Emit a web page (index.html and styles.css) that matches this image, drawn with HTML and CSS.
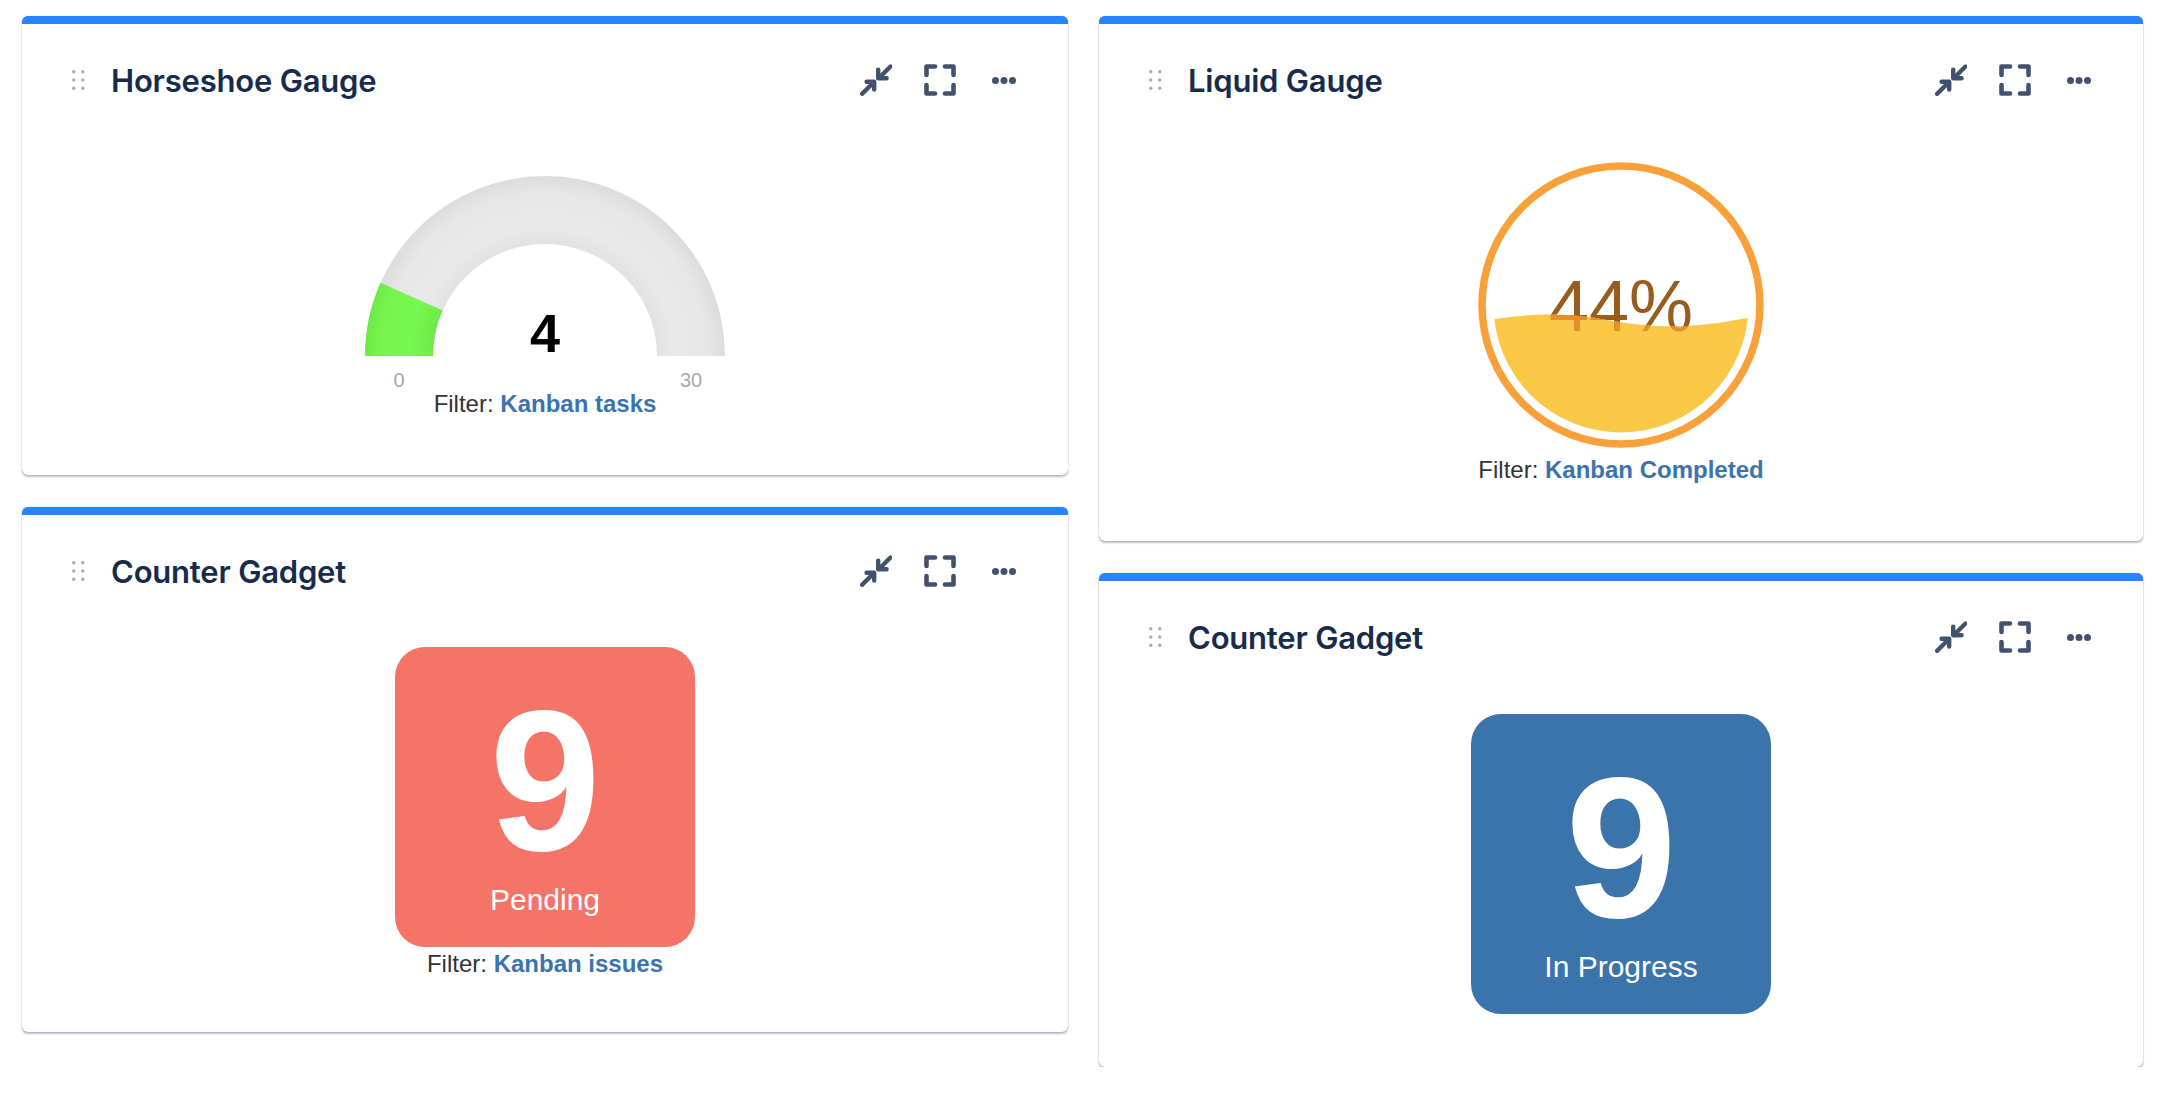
FILE: index.html
```html
<!DOCTYPE html>
<html lang="en">
<head>
<meta charset="utf-8">
<title>Dashboard gadgets</title>
<link rel="stylesheet" href="styles.css">
</head>
<body>
<svg class="defs" width="0" height="0" aria-hidden="true">
  <defs>
    <symbol id="i-drag" viewBox="0 0 13 20">
      <circle cx="1.75" cy="1.75" r="1.75"/><circle cx="10.75" cy="1.75" r="1.75"/>
      <circle cx="1.75" cy="10" r="1.75"/><circle cx="10.75" cy="10" r="1.75"/>
      <circle cx="1.75" cy="18.25" r="1.75"/><circle cx="10.75" cy="18.25" r="1.75"/>
    </symbol>
    <symbol id="i-collapse" viewBox="0 0 32 32">
      <g fill="none" stroke="currentColor" stroke-width="4.4" stroke-linecap="round" stroke-linejoin="round">
        <path d="M30.5 2.5 L19.5 13.5"/>
        <path d="M18.2 5.6 V14.2 H26.6"/>
        <path d="M2.2 29.8 L13 19"/>
        <path d="M6.6 17.8 H14.2 V25.6"/>
      </g>
    </symbol>
    <symbol id="i-full" viewBox="0 0 32 32">
      <g fill="none" stroke="currentColor" stroke-width="4.6" stroke-linecap="round" stroke-linejoin="round">
        <path d="M2.5 11 V2.5 H11"/>
        <path d="M21 2.5 H29.5 V11"/>
        <path d="M29.5 21 V29.5 H21"/>
        <path d="M11 29.5 H2.5 V21"/>
      </g>
    </symbol>
    <symbol id="i-more" viewBox="0 0 32 32">
      <circle cx="7.5" cy="16.5" r="3.5"/><circle cx="16" cy="16.5" r="3.5"/><circle cx="24.5" cy="16.5" r="3.5"/>
    </symbol>
  </defs>
</svg>

<main class="dashboard">
  <section class="column">
    <article class="card">
      <header class="card-head">
        <svg class="drag" width="13" height="20"><use href="#i-drag"/></svg>
        <h2 class="card-title">Horseshoe Gauge</h2>
        <div class="actions">
          <svg class="icon" width="32" height="32"><use href="#i-collapse"/></svg>
          <svg class="icon" width="32" height="32"><use href="#i-full"/></svg>
          <svg class="icon" width="32" height="32"><use href="#i-more"/></svg>
        </div>
      </header>
      <div class="card-body body-gauge">
        <svg class="horseshoe" width="400" height="214" viewBox="0 0 400 214">
          <defs>
            <radialGradient id="band" gradientUnits="userSpaceOnUse" cx="200" cy="180" r="180">
              <stop offset="0.62" stop-color="#e3e2e3"/>
              <stop offset="0.72" stop-color="#eae9ea"/>
              <stop offset="0.9" stop-color="#e8e7e8"/>
              <stop offset="1" stop-color="#dddcdd"/>
            </radialGradient>
            <radialGradient id="greenband" gradientUnits="userSpaceOnUse" cx="200" cy="180" r="180">
              <stop offset="0.62" stop-color="#6fe94a"/>
              <stop offset="0.75" stop-color="#78f74f"/>
              <stop offset="0.92" stop-color="#77f54e"/>
              <stop offset="1" stop-color="#6ee847"/>
            </radialGradient>
          </defs>
          <path d="M20 180 A180 180 0 0 1 380 180 L312 180 A112 112 0 0 0 88 180 Z" fill="url(#band)"/>
          <path d="M20 180 A180 180 0 0 1 35.56 106.79 L97.68 134.45 A112 112 0 0 0 88 180 Z" fill="url(#greenband)"/>
          <text class="hs-value" x="200" y="176">4</text>
          <text class="hs-label" x="54" y="211">0</text>
          <text class="hs-label" x="346" y="211">30</text>
        </svg>
        <p class="filter">Filter: <a href="#">Kanban tasks</a></p>
      </div>
    </article>

    <article class="card">
      <header class="card-head">
        <svg class="drag" width="13" height="20"><use href="#i-drag"/></svg>
        <h2 class="card-title">Counter Gadget</h2>
        <div class="actions">
          <svg class="icon" width="32" height="32"><use href="#i-collapse"/></svg>
          <svg class="icon" width="32" height="32"><use href="#i-full"/></svg>
          <svg class="icon" width="32" height="32"><use href="#i-more"/></svg>
        </div>
      </header>
      <div class="card-body body-counter">
        <div class="counter counter-red">
          <span class="counter-num">9</span>
          <span class="counter-label">Pending</span>
        </div>
        <p class="filter filter-tight">Filter: <a href="#">Kanban issues</a></p>
      </div>
    </article>
  </section>

  <section class="column">
    <article class="card">
      <header class="card-head">
        <svg class="drag" width="13" height="20"><use href="#i-drag"/></svg>
        <h2 class="card-title">Liquid Gauge</h2>
        <div class="actions">
          <svg class="icon" width="32" height="32"><use href="#i-collapse"/></svg>
          <svg class="icon" width="32" height="32"><use href="#i-full"/></svg>
          <svg class="icon" width="32" height="32"><use href="#i-more"/></svg>
        </div>
      </header>
      <div class="card-body body-liquid">
        <svg class="liquid" width="290" height="290" viewBox="0 0 290 290">
          <defs>
            <clipPath id="inner"><circle cx="145" cy="145" r="127.5"/></clipPath>
            <clipPath id="wave">
              <path d="M-112 160.4 Q-50.5 172 11 160.4 Q72.5 148.8 134 160.4 Q195.5 172 257 160.4 Q318.5 148.8 380 160.4 V300 H-112 Z"/>
            </clipPath>
          </defs>
          <circle cx="145" cy="145" r="139" fill="none" stroke="#f8a13b" stroke-width="7.5"/>
          <text class="lq-text lq-top" x="145" y="170.5">44%</text>
          <g clip-path="url(#inner)">
            <path d="M-112 160.4 Q-50.5 172 11 160.4 Q72.5 148.8 134 160.4 Q195.5 172 257 160.4 Q318.5 148.8 380 160.4 V300 H-112 Z" fill="#f9c846"/>
          </g>
          <g clip-path="url(#wave)">
            <text class="lq-text lq-bottom" x="145" y="170.5">44%</text>
          </g>
        </svg>
        <p class="filter filter-liquid">Filter: <a href="#">Kanban Completed</a></p>
      </div>
    </article>

    <article class="card">
      <header class="card-head">
        <svg class="drag" width="13" height="20"><use href="#i-drag"/></svg>
        <h2 class="card-title">Counter Gadget</h2>
        <div class="actions">
          <svg class="icon" width="32" height="32"><use href="#i-collapse"/></svg>
          <svg class="icon" width="32" height="32"><use href="#i-full"/></svg>
          <svg class="icon" width="32" height="32"><use href="#i-more"/></svg>
        </div>
      </header>
      <div class="card-body body-counter body-counter-solo">
        <div class="counter counter-blue">
          <span class="counter-num">9</span>
          <span class="counter-label">In Progress</span>
        </div>
      </div>
    </article>
  </section>
</main>
</body>
</html>
```

FILE: styles.css
```css
* { box-sizing: border-box; }

html, body {
  margin: 0;
  padding: 0;
  background: #ffffff;
}

body {
  font-family: "Liberation Sans", Arial, sans-serif;
}

.defs {
  position: absolute;
  width: 0;
  height: 0;
  overflow: hidden;
}

.dashboard {
  display: grid;
  grid-template-columns: 1046px 1044px;
  column-gap: 31px;
  padding: 16px 25px 0 22px;
  align-items: start;
}

.column {
  display: flex;
  flex-direction: column;
  gap: 32px;
}

.card {
  background: #ffffff;
  border-top: 8px solid #2684ff;
  border-radius: 6px;
  box-shadow: 0 0 1px rgba(9, 30, 66, 0.45), 0 2px 2px rgba(9, 30, 66, 0.28);
}

.card-head {
  display: flex;
  align-items: center;
  height: 72px;
  padding: 40px 48px 0 50px;
}

.drag {
  flex: none;
  fill: #a5adba;
}

.card-title {
  margin: 0 0 0 26px;
  flex: 1;
  font-family: Inter, "Noto Sans", sans-serif;
  font-weight: 600;
  font-size: 31px;
  line-height: 32px;
  letter-spacing: -0.2px;
  color: #172b4d;
  padding-top: 2px;
}

.actions {
  display: flex;
  gap: 32px;
  color: #42526e;
}

.icon {
  display: block;
  fill: #42526e;
  color: #42526e;
}

.card-body {
  display: flex;
  flex-direction: column;
  align-items: center;
}

.body-gauge {
  padding: 80px 0 57px;
}

.body-liquid {
  padding: 64px 0 57px;
}

.body-counter {
  padding: 60px 0 54px;
}

.body-counter-solo {
  padding: 61px 0 53px;
}

.horseshoe, .liquid {
  display: block;
}

.hs-value {
  font-family: "Liberation Sans", Arial, sans-serif;
  font-weight: 700;
  font-size: 54px;
  fill: #000000;
  text-anchor: middle;
}

.hs-label {
  font-family: "Liberation Sans", Arial, sans-serif;
  font-size: 20px;
  fill: #a8a8a8;
  text-anchor: middle;
}

.lq-text {
  font-family: "Liberation Sans", Arial, sans-serif;
  font-size: 72px;
  text-anchor: middle;
}

.lq-top { fill: #985c1e; }
.lq-bottom { fill: #e3902b; }

.filter {
  margin: 0;
  font-size: 24px;
  line-height: 28px;
  color: #333333;
  text-align: center;
}

.filter a {
  color: #3b73af;
  font-weight: 700;
  text-decoration: none;
}

.filter-liquid { margin-top: 6px; }
.filter-tight { margin-top: 3px; }

.counter {
  width: 300px;
  height: 300px;
  border-radius: 30px;
  display: flex;
  flex-direction: column;
  align-items: center;
  padding-top: 34px;
  color: #ffffff;
}

.counter-red { background: #f47467; }
.counter-blue { background: #3b73ab; }

.counter-num {
  font-weight: 700;
  font-size: 200px;
  line-height: 200px;
}

.counter-label {
  margin-top: 2px;
  font-size: 30px;
  line-height: 34px;
}
```
